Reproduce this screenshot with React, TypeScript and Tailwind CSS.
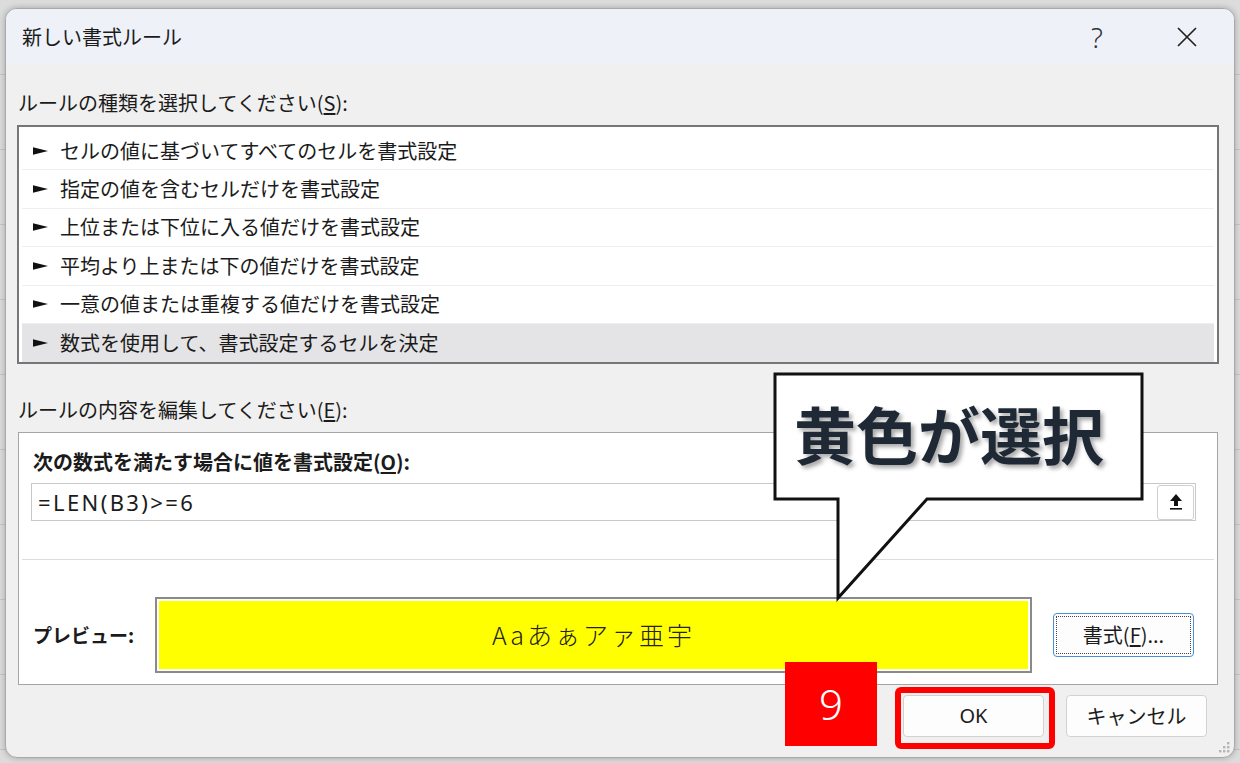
import React from "react";

const rules = [
  "セルの値に基づいてすべてのセルを書式設定",
  "指定の値を含むセルだけを書式設定",
  "上位または下位に入る値だけを書式設定",
  "平均より上または下の値だけを書式設定",
  "一意の値または重複する値だけを書式設定",
  "数式を使用して、書式設定するセルを決定",
];

function Pointer() {
  return (
    <svg width="15" height="10" viewBox="0 0 15 10" className="shrink-0">
      <path d="M0 1.2 L15 5 L0 8.8 Z" fill="#111" />
    </svg>
  );
}

function CollapseIcon() {
  return (
    <svg width="14" height="18" viewBox="0 0 14 18">
      <path d="M7 1 L13 8 L9 8 L9 13 L5 13 L5 8 L1 8 Z" fill="#111" />
      <rect x="1" y="15" width="12" height="1.6" fill="#111" />
    </svg>
  );
}

export default function App() {
  return (
    <div className="relative h-[763px] w-[1240px] overflow-hidden bg-[#dcdcdc] bg-[image:repeating-linear-gradient(to_bottom,transparent_0px,transparent_74px,#c6c6c6_74px,#c6c6c6_75px)] font-['Noto_Sans_CJK_JP','Noto_Sans',sans-serif] text-[#1b1b1b]">
      <div className="pl-[5px] pt-[8px]">
        <div className="relative flex h-[750px] w-[1230px] flex-col overflow-hidden rounded-[12px] border border-[#a9a9a9] bg-[#f0f0f0] shadow-[0_0_6px_rgba(0,0,0,0.25)]">
          {/* title bar */}
          <div className="flex h-[56px] shrink-0 items-center bg-[#eef2f8] pl-[16px] pr-[24px]">
            <span className="text-[20px] leading-none">新しい書式ルール</span>
            <div className="ml-auto flex items-center gap-[44px]">
              <span className="grid w-[46px] place-items-center font-['Noto_Sans',sans-serif] text-[28px] font-light leading-none text-[#333]">?</span>
              <span className="grid w-[46px] place-items-center">
                <svg width="22" height="22" viewBox="0 0 22 22">
                  <path d="M2 2 L20 20 M20 2 L2 20" stroke="#222" strokeWidth="1.7" />
                </svg>
              </span>
            </div>
          </div>

          <div className="flex flex-1 flex-col pl-[11px] pr-[15px]">
            <div className="mt-[24px] h-[28px] pl-[1px] text-[20px] leading-[28px]">
              ルールの種類を選択してください(<span className="underline underline-offset-2">S</span>):
            </div>

            <div className="mt-[8px] h-[239px] overflow-hidden border-2 border-[#767676] bg-white px-[3px] pt-[5px]">
              {rules.map((rule, i) => (
                <div
                  key={rule}
                  className={
                    i === rules.length - 1
                      ? "flex h-[38.4px] items-center gap-[12px] bg-[#e4e4e6] pl-[11px] text-[20px]"
                      : "flex h-[38.4px] items-center gap-[12px] border-b border-[#eeeeee] pl-[11px] text-[20px]"
                  }
                >
                  <Pointer />
                  <span>{rule}</span>
                </div>
              ))}
            </div>

            <div className="mt-[32px] h-[28px] pl-[1px] text-[20px] leading-[28px]">
              ルールの内容を編集してください(<span className="underline underline-offset-2">E</span>):
            </div>

            <div className="mx-[1px] mt-[8px] flex h-[253px] flex-col border border-[#a5a5a5] bg-white">
              <div className="ml-[14px] mt-[15px] h-[28px] text-[20px] font-bold leading-[28px]">
                次の数式を満たす場合に値を書式設定(<span className="underline underline-offset-2">O</span>):
              </div>
              <div className="ml-[12px] mr-[21px] mt-[7px] flex h-[38px] items-center border border-[#c8c8c8] pl-[6px] pr-[1px]">
                <span className="font-['Noto_Sans',sans-serif] text-[22px] tracking-[2.4px]">=LEN(B3)&gt;=6</span>
                <div className="ml-auto grid h-[35px] w-[37px] place-items-center rounded-[3px] border border-[#cfcfcf] bg-white">
                  <CollapseIcon />
                </div>
              </div>
              <div className="mx-[3px] mt-[38px] h-px bg-[#dcdcdc]" />
              <div className="mt-[37px] flex items-center pl-[14px]">
                <span className="w-[122px] text-[19px] font-bold">プレビュー:</span>
                <div className="h-[76px] w-[877px] border-2 border-[#8a8a8a] bg-white p-[2px]">
                  <div className="grid h-full place-items-center bg-[#ffff00]">
                    <span className="text-[25px] font-light tracking-[3px] text-[#222]">Aaあぁアァ亜宇</span>
                  </div>
                </div>
                <div className="ml-[21px] h-[44px] w-[141px] rounded-[4px] border border-[#4a90d9] bg-[#fdfdfd] p-[2px]">
                  <div className="grid h-full place-items-center border border-dotted border-[#444] text-[20px]">
                    <span>
                      書式(<span className="underline underline-offset-2">F</span>)...
                    </span>
                  </div>
                </div>
              </div>
            </div>

            <div className="mr-[12px] mt-[10px] flex justify-end gap-[22px]">
              <div className="grid h-[42px] w-[141px] place-items-center rounded-[4px] border border-[#d2d2d2] bg-[#fdfdfd] font-['Noto_Sans',sans-serif] text-[20px]">
                OK
              </div>
              <div className="grid h-[42px] w-[141px] place-items-center rounded-[4px] border border-[#d2d2d2] bg-[#fdfdfd] text-[20px]">
                キャンセル
              </div>
            </div>
          </div>

          <svg className="absolute bottom-[3px] right-[3px]" width="14" height="14" viewBox="0 0 14 14">
            <g fill="#b5b5b5">
              <rect x="10" y="2" width="2.4" height="2.4" />
              <rect x="6" y="6" width="2.4" height="2.4" />
              <rect x="10" y="6" width="2.4" height="2.4" />
              <rect x="2" y="10" width="2.4" height="2.4" />
              <rect x="6" y="10" width="2.4" height="2.4" />
              <rect x="10" y="10" width="2.4" height="2.4" />
            </g>
          </svg>
        </div>
      </div>

      {/* annotations */}
      <div className="absolute left-[895px] top-[687px] h-[62px] w-[160px] rounded-[6px] border-[6px] border-[#ff0000]" />
      <div className="absolute left-[785px] top-[662px] grid h-[84px] w-[92px] place-items-center bg-[#ff0000] font-['Noto_Sans',sans-serif] text-[42px] font-light leading-none text-white">
        9
      </div>

      <svg className="absolute left-[772px] top-[371px]" width="374" height="232" viewBox="0 0 374 232">
        <polygon
          points="3,3 370,3 370,128 155,128 66,227 66,128 3,128"
          fill="#ffffff"
          stroke="#111111"
          strokeWidth="3"
          strokeLinejoin="miter"
        />
      </svg>
      <div className="absolute left-[775px] top-[374px] flex h-[125px] w-[367px] items-center pb-[8px] pl-[19px] text-[62px] font-bold leading-none text-[#1f2935] [text-shadow:3px_3px_4px_rgba(0,0,0,0.35)]">
        黄色が選択
      </div>
    </div>
  );
}
